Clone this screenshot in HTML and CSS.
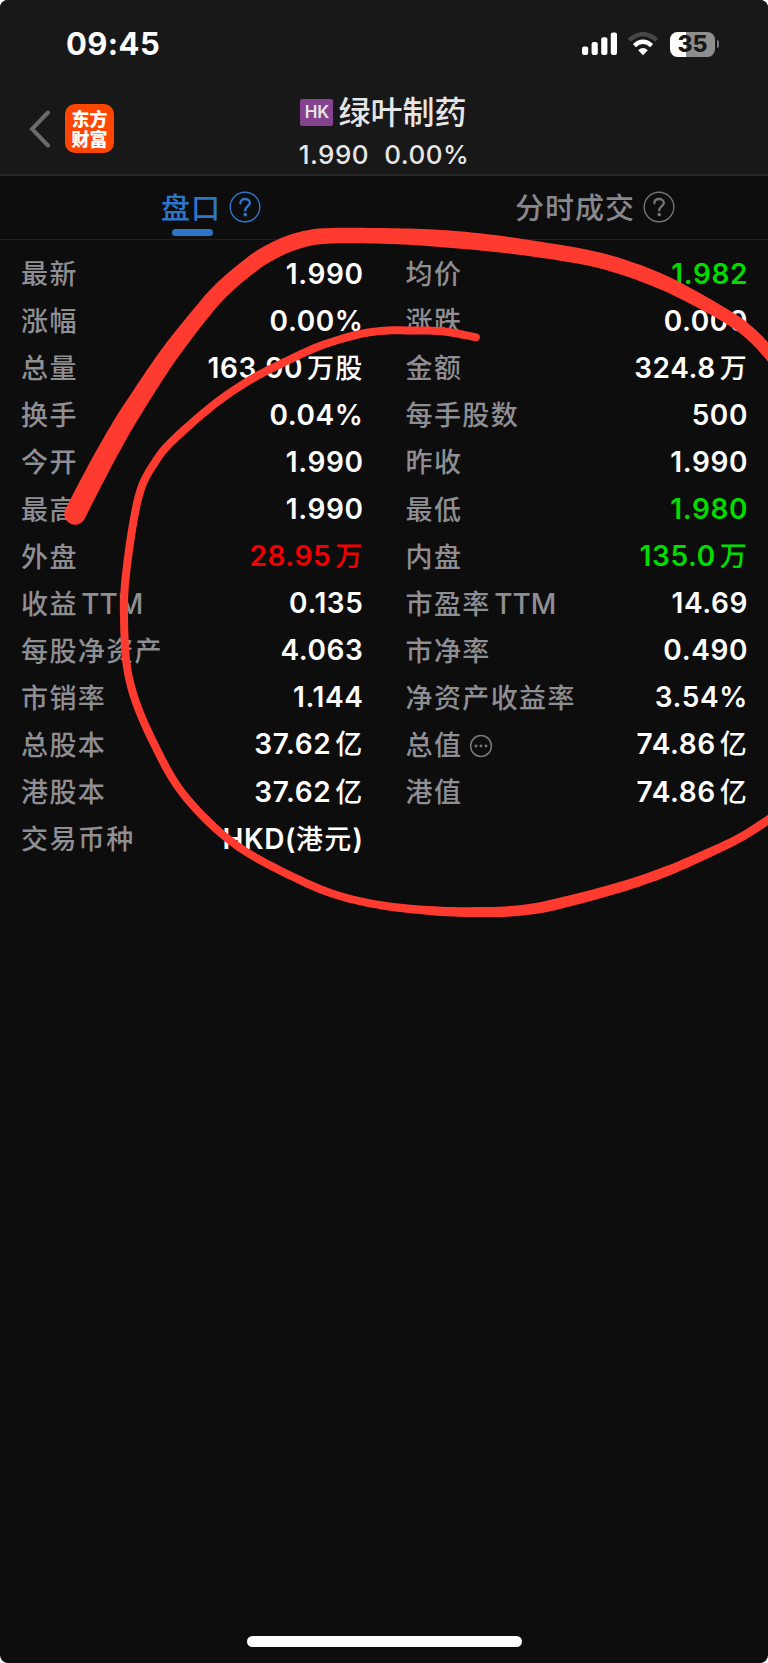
FILE: index.html
```
<!DOCTYPE html>
<html lang="zh-CN">
<head>
    <meta charset="UTF-8">
    <meta name="viewport" content="width=device-width, initial-scale=1.0">
    <title>绿叶制药 - 盘口</title>
    <link rel="stylesheet" href="styles.css">
</head>
<body>
    <div class="screen">
        <header class="header">
            <div class="status-bar">
                <span class="time">09:45</span>
                <div class="status-icons">
                    <svg class="signal" width="36" height="24" viewBox="0 0 36 24" fill="#fff">
                        <rect x="0" y="14.5" width="6.2" height="8.5" rx="2"/>
                        <rect x="9.6" y="10" width="6.2" height="13" rx="2"/>
                        <rect x="19.2" y="5.3" width="6.2" height="17.7" rx="2"/>
                        <rect x="28.8" y="0.5" width="6.2" height="22.5" rx="2"/>
                    </svg>
                    <svg class="wifi" width="32" height="24" viewBox="0 0 32 24" fill="none">
                        <path d="M2.3 8.2 Q16 -3.8 29.7 8.2" stroke="#474747" stroke-width="4.4"/>
                        <path d="M7.4 13.6 Q16 6 24.6 13.6" stroke="#fff" stroke-width="4.4"/>
                        <path d="M11.2 18.2 Q16 14 20.8 18.2 L16 23.2 Z" fill="#fff"/>
                    </svg>
                    <div class="battery"><span>35</span></div>
                    <div class="battery-cap"></div>
                </div>
            </div>
            <div class="nav">
                <div class="nav-left">
                    <svg class="back" width="22" height="38" viewBox="0 0 22 38" fill="none" stroke="#6a6a6a" stroke-width="4" stroke-linecap="round">
                        <path d="M19 2.5 L3 19 L19 35.5"/>
                    </svg>
                    <div class="logo">东方<br>财富</div>
                </div>
                <div class="stock">
                    <div class="stock-name"><span class="market">HK</span>绿叶制药</div>
                    <div class="stock-price"><span>1.990</span><span>0.00%</span></div>
                </div>
            </div>
        </header>

        <div class="tabs">
            <div class="tab active">
                <span class="tab-text">盘口</span>
                <svg class="help" width="32" height="32" viewBox="0 0 32 32" fill="none" stroke="currentColor">
                    <circle cx="16" cy="16" r="14.8" stroke-width="1.4"/>
                    <path d="M11.4 12.3 C11.4 9.6 13.4 8 16.1 8 C18.8 8 20.8 9.6 20.8 12 C20.8 15 16.2 15.3 16.2 19.4" stroke-width="2.4" stroke-linecap="round"/>
                    <circle cx="16.2" cy="23.6" r="1.9" fill="currentColor" stroke="none"/>
                </svg>
            </div>
            <div class="tab">
                <span class="tab-text">分时成交</span>
                <svg class="help" width="32" height="32" viewBox="0 0 32 32" fill="none" stroke="currentColor">
                    <circle cx="16" cy="16" r="14.8" stroke-width="1.4"/>
                    <path d="M11.4 12.3 C11.4 9.6 13.4 8 16.1 8 C18.8 8 20.8 9.6 20.8 12 C20.8 15 16.2 15.3 16.2 19.4" stroke-width="2.3" stroke-linecap="round"/>
                    <circle cx="16.2" cy="23.6" r="1.8" fill="currentColor" stroke="none"/>
                </svg>
            </div>
        </div>

        <div class="quote">
            <div class="row"><span class="label">最新</span><span class="value">1.990</span></div>
            <div class="row"><span class="label">均价</span><span class="value down">1.982</span></div>
            <div class="row"><span class="label">涨幅</span><span class="value">0.00%</span></div>
            <div class="row"><span class="label">涨跌</span><span class="value">0.000</span></div>
            <div class="row"><span class="label">总量</span><span class="value">163.90<i>万股</i></span></div>
            <div class="row"><span class="label">金额</span><span class="value">324.8<i>万</i></span></div>
            <div class="row"><span class="label">换手</span><span class="value">0.04%</span></div>
            <div class="row"><span class="label">每手股数</span><span class="value">500</span></div>
            <div class="row"><span class="label">今开</span><span class="value">1.990</span></div>
            <div class="row"><span class="label">昨收</span><span class="value">1.990</span></div>
            <div class="row"><span class="label">最高</span><span class="value">1.990</span></div>
            <div class="row"><span class="label">最低</span><span class="value down">1.980</span></div>
            <div class="row"><span class="label">外盘</span><span class="value up">28.95<i>万</i></span></div>
            <div class="row"><span class="label">内盘</span><span class="value down">135.0<i>万</i></span></div>
            <div class="row"><span class="label">收益<b>TTM</b></span><span class="value">0.135</span></div>
            <div class="row"><span class="label">市盈率<b>TTM</b></span><span class="value">14.69</span></div>
            <div class="row"><span class="label">每股净资产</span><span class="value">4.063</span></div>
            <div class="row"><span class="label">市净率</span><span class="value">0.490</span></div>
            <div class="row"><span class="label">市销率</span><span class="value">1.144</span></div>
            <div class="row"><span class="label">净资产收益率</span><span class="value">3.54%</span></div>
            <div class="row"><span class="label">总股本</span><span class="value">37.62<i>亿</i></span></div>
            <div class="row">
                <span class="label">总值</span>
                <svg class="more" width="24" height="24" viewBox="0 0 24 24" fill="#77777c">
                    <circle cx="12" cy="12" r="10.4" fill="none" stroke="#77777c" stroke-width="1.5"/>
                    <circle cx="7" cy="12" r="1.4"/>
                    <circle cx="12" cy="12" r="1.4"/>
                    <circle cx="17" cy="12" r="1.4"/>
                </svg>
                <span class="value">74.86<i>亿</i></span>
            </div>
            <div class="row"><span class="label">港股本</span><span class="value">37.62<i>亿</i></span></div>
            <div class="row"><span class="label">港值</span><span class="value">74.86<i>亿</i></span></div>
            <div class="row"><span class="label">交易币种</span><span class="value">HKD(<em>港元</em>)</span></div>
        </div>

        <div class="home-bar"></div>

        <svg class="marker" width="768" height="1663" viewBox="0 0 768 1663" fill="#ff3b30">
            <path id="stroke-thick"/>
            <path id="stroke-thin"/>
        </svg>
    </div>
    <script src="script.js"></script>
</body>
</html>
```
FILE: styles.css
```
* {
    box-sizing: border-box;
}
body {
    margin: 0;
    background: #fff;
    font-family: Inter, "Noto Sans CJK SC", sans-serif;
}
.screen {
    position: relative;
    display: flex;
    flex-direction: column;
    width: 768px;
    height: 1663px;
    background: #0d0d0d;
    border-radius: 8px;
    overflow: hidden;
}
.header {
    height: 176px;
    background: #181818;
    border-bottom: 2px solid #272727;
}
.status-bar {
    display: flex;
    justify-content: space-between;
    align-items: center;
    height: 88px;
    padding: 0 49px 0 66px;
}
.time {
    color: #fff;
    font-size: 31px;
    font-weight: 700;
    line-height: 40px;
    letter-spacing: 0.4px;
}
.status-icons {
    display: flex;
    align-items: center;
}
.wifi {
    margin-left: 9px;
}
.battery {
    width: 45px;
    height: 25px;
    margin-left: 11px;
    border-radius: 7.5px;
    background: linear-gradient(90deg, #fff 35%, #8e8e8e 35%);
    color: #181818;
    font-size: 23px;
    font-weight: 800;
    line-height: 25px;
    text-align: center;
}
.battery-cap {
    width: 2.5px;
    height: 8px;
    margin-left: 1.5px;
    border-radius: 0 3px 3px 0;
    background: #777;
}
.nav {
    display: grid;
    grid-template-columns: 1fr auto 1fr;
    height: 86px;
    padding: 0 29px;
}
.nav-left {
    display: flex;
    align-items: center;
    gap: 14px;
    height: 81px;
}
.logo {
    width: 49px;
    height: 49px;
    padding-top: 4px;
    border-radius: 10px;
    background: #ff4600;
    color: #fff;
    font-family: "Noto Sans CJK SC", sans-serif;
    font-size: 18px;
    font-weight: 900;
    line-height: 20px;
    text-align: center;
}
.stock {
    display: flex;
    flex-direction: column;
    align-items: center;
    color: #e6e6e6;
}
.stock-name {
    display: flex;
    align-items: center;
    height: 48px;
    font-size: 32px;
    font-weight: 500;
    line-height: 46px;
    padding-top: 1px;
    margin-left: -1px;
}
.market {
    width: 33px;
    height: 27px;
    margin-right: 5px;
    border-radius: 2px;
    background: #85428f;
    font-size: 17px;
    font-weight: 600;
    line-height: 27px;
    text-align: center;
}
.stock-price {
    display: flex;
    gap: 15px;
    font-size: 26px;
    font-weight: 500;
    line-height: 38px;
    letter-spacing: 0.5px;
}
.tabs {
    display: grid;
    grid-template-columns: 1fr 1fr;
    height: 64px;
    border-bottom: 1px solid #212121;
}
.tab {
    position: relative;
    display: flex;
    justify-content: center;
    align-items: center;
    color: #88888e;
    font-size: 29px;
    font-weight: 500;
    letter-spacing: 1px;
    padding: 0 0 2px 38px;
    gap: 8px;
}
.tab-text {
    margin-top: -1px;
}
.tab .help {
    color: #737376;
}
.tab.active,
.active .help {
    color: #2e75c8;
}
.active::after {
    content: "";
    position: absolute;
    left: 171.5px;
    bottom: 3px;
    width: 41px;
    height: 7px;
    border-radius: 3.5px;
    background: #2e75c8;
}
.quote {
    display: grid;
    grid-template-columns: 1fr 1fr;
    grid-auto-rows: 47.1px;
    column-gap: 42px;
    padding: 10px 20px 0 21px;
}
.row {
    display: flex;
    align-items: center;
}
.label {
    margin-top: -2px;
    color: #8e8e93;
    font-size: 27px;
    font-weight: 500;
    letter-spacing: 1.4px;
}
.label b {
    margin-left: 3.5px;
    font-weight: 500;
    font-size: 28px;
    letter-spacing: 0;
}
.more {
    margin: 4px 0 0 7px;
}
.value {
    margin-left: auto;
    color: #fff;
    font-size: 28px;
    font-weight: 570;
    line-height: 34px;
    letter-spacing: 0.6px;
    white-space: nowrap;
}
.value i,
.value em {
    font-style: normal;
    font-size: 27px;
    font-weight: 500;
    line-height: 1;
    letter-spacing: 1.2px;
}
.value i {
    margin-left: 4px;
}
.up {
    color: #f00000;
}
.down {
    color: #00dc00;
}
.home-bar {
    width: 275px;
    height: 11px;
    margin: auto auto 16px;
    border-radius: 6px;
    background: #fff;
}
.marker {
    position: absolute;
    left: 0;
    top: 0;
}
```
FILE: script.js
```
// Marker strokes: x, y, width of the pen at each point
const thick = [
    [75, 514, 21.5], [98, 469.5, 21], [121.7, 427, 20.2], [145, 390, 19], [170, 353, 18], [200.3, 314, 16.8],
    [222.5, 289, 16.5], [251.5, 264.5, 16.5], [272, 251.5, 16.5], [295.5, 241.5, 16.2], [325, 236, 15.6],
    [384, 235.9, 15.6], [433.5, 238, 17], [483, 242.2, 17], [533, 248.6, 15.8], [589, 258, 15.5],
    [628.5, 269, 15.5], [667.3, 284.3, 15], [707, 305, 13.5], [737, 323, 13], [755, 338, 12.7],
    [768, 352, 12.5], [782, 369, 12]
];
const thin = [
    [476.3, 337.3, 8], [444, 331.5, 8], [414, 330.5, 8], [384, 330.7, 8], [356, 335, 8], [320, 346, 8],
    [283.3, 362.7, 8], [250, 380, 8], [213.3, 405, 8], [170, 443.3, 8], [153.3, 465, 8], [141.7, 486.7, 8],
    [134.3, 516.7, 8], [127.7, 560, 8], [124.3, 595, 8], [124.5, 636.7, 8], [127.5, 670, 8], [136.3, 703.3, 8],
    [153.8, 743.3, 8], [176.7, 785, 8], [206.7, 820, 8], [243.3, 850, 8], [293.3, 877, 8], [336.7, 895, 8],
    [384, 905.7, 8], [440.7, 911.3, 9.2], [485, 912, 10], [514, 911, 10.5], [550.7, 905.5, 11], [617.3, 888, 10.5],
    [667.3, 871, 10], [717.3, 849, 9], [744, 835.5, 8.6], [768, 820, 8.6], [785, 808, 8.6]
];

// Catmull-Rom through the points
function smooth(points) {
    const out = [];
    for (let i = 0; i < points.length - 1; i++) {
        const p0 = points[Math.max(i - 1, 0)];
        const p1 = points[i];
        const p2 = points[i + 1];
        const p3 = points[Math.min(i + 2, points.length - 1)];
        for (let s = 0; s < 8; s++) {
            const t = s / 8;
            out.push([0, 1, 2].map(k => 0.5 * (2 * p1[k] + (p2[k] - p0[k]) * t
                + (2 * p0[k] - 5 * p1[k] + 4 * p2[k] - p3[k]) * t * t
                + (3 * p1[k] - p0[k] - 3 * p2[k] + p3[k]) * t * t * t)));
        }
    }
    out.push(points[points.length - 1]);
    return out;
}

function drawStroke(id, points) {
    const line = smooth(points);
    const left = [];
    const right = [];
    line.forEach((p, i) => {
        const a = line[Math.max(i - 1, 0)];
        const b = line[Math.min(i + 1, line.length - 1)];
        const len = Math.hypot(b[0] - a[0], b[1] - a[1]);
        const nx = (b[1] - a[1]) / len * p[2] / 2;
        const ny = (a[0] - b[0]) / len * p[2] / 2;
        left.push((p[0] + nx).toFixed(1) + ' ' + (p[1] + ny).toFixed(1));
        right.unshift((p[0] - nx).toFixed(1) + ' ' + (p[1] - ny).toFixed(1));
    });
    const r = points[0][2] / 2;
    const d = 'M' + left.concat(right).join('L') + `A${r} ${r} 0 0 1 ${left[0]}Z`;
    document.getElementById(id).setAttribute('d', d);
}

drawStroke('stroke-thick', thick);
drawStroke('stroke-thin', thin);
```
